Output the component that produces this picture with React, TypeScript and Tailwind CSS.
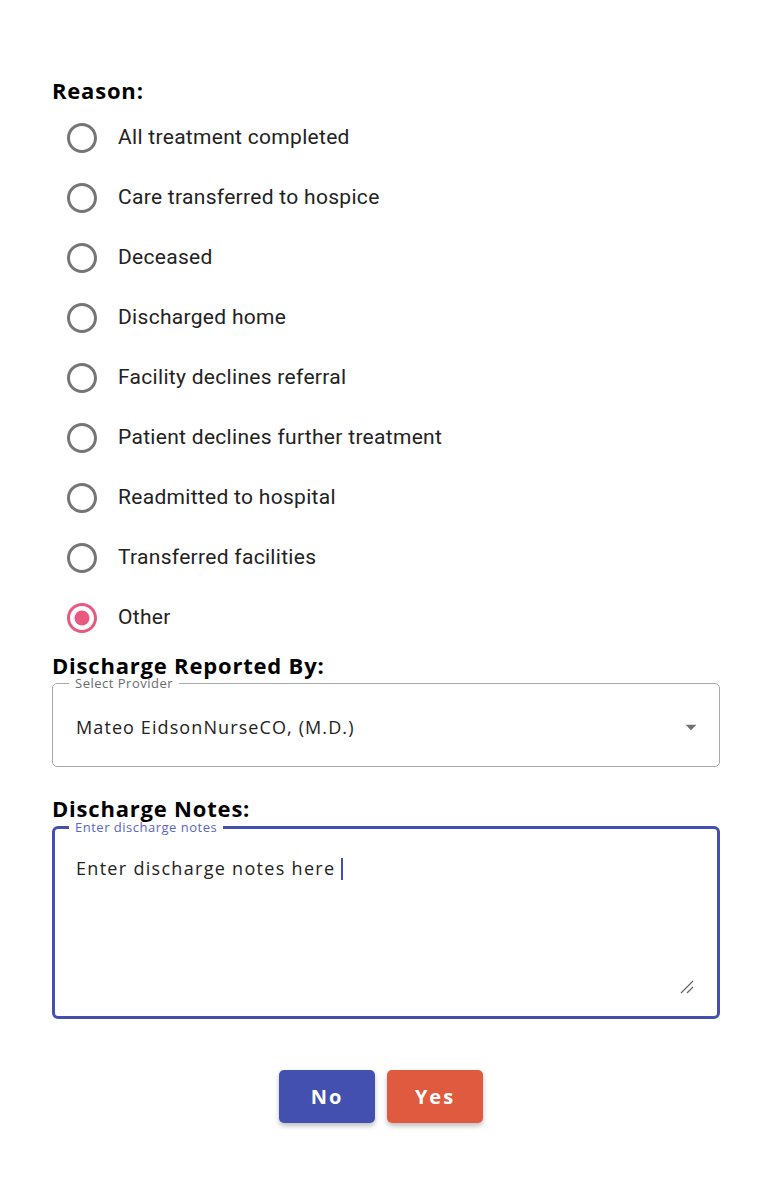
import React, { useState } from 'react';

const REASONS = [
    'All treatment completed',
    'Care transferred to hospice',
    'Deceased',
    'Discharged home',
    'Facility declines referral',
    'Patient declines further treatment',
    'Readmitted to hospital',
    'Transferred facilities',
    'Other',
];

const headFont = { fontFamily: '"Open Sans", "DejaVu Sans", sans-serif' };

const RadioIcon = ({ checked }: { checked: boolean }) => (
    <svg width="36" height="36" viewBox="0 0 24 24" fill={checked ? '#e8587f' : '#757575'}>
        <path d="M12 2C6.48 2 2 6.48 2 12s4.48 10 10 10 10-4.48 10-10S17.52 2 12 2zm0 18c-4.42 0-8-3.58-8-8s3.58-8 8-8 8 3.58 8 8-3.58 8-8 8z" />
        {checked && <circle cx="12" cy="12" r="5" />}
    </svg>
);

export default function App() {
    const [reason, setReason] = useState('Other');

    return (
        <div className="min-h-[1188px] w-[770px] bg-white pl-[52px] pr-[50px] pt-[75px] text-[#111]">
            {/* Reason */}
            <h2 className="h-[30px] text-[22px] font-bold leading-[30px] tracking-[0.8px] text-black" style={headFont}>Reason:</h2>
            <div className="flex flex-col pt-[3px]">
                {REASONS.map(r => (
                    <label key={r} onClick={() => setReason(r)} className="flex h-[60px] cursor-pointer items-center">
                        <span className="ml-[12px] flex h-[36px] w-[36px] items-center justify-center">
                            <RadioIcon checked={reason === r} />
                        </span>
                        <span
                            className="ml-[18px] text-[21px] tracking-[0.3px] text-[#222]"
                            style={{ fontFamily: 'Roboto, sans-serif' }}
                        >
                            {r}
                        </span>
                    </label>
                ))}
            </div>

            {/* Reported by */}
            <h2 className="mt-[5px] h-[24px] text-[22px] font-bold leading-[24px] tracking-[0.8px] text-black" style={headFont}>Discharge Reported By:</h2>
            <fieldset className="relative h-[90px] rounded-[5px] border border-[#a8a8a8] px-[14px]" style={headFont}>
                <legend className="ml-[2px] px-[6px] text-[13px] leading-[13px] tracking-[0.5px] text-[#6b6b6b]">Select Provider</legend>
                <div className="flex h-[76px] items-center justify-between pb-[2px] pl-[9px] pr-[1px]">
                    <span className="text-[18px] tracking-[1.1px] text-[#222]">Mateo EidsonNurseCO, (M.D.)</span>
                    <svg width="26" height="26" viewBox="0 0 24 24" fill="#707070">
                        <path d="M7 10l5 5 5-5z" />
                    </svg>
                </div>
            </fieldset>

            {/* Notes */}
            <h2 className="mt-[29px] h-[24px] text-[22px] font-bold leading-[24px] tracking-[0.8px] text-black" style={headFont}>Discharge Notes:</h2>
            <fieldset className="relative mt-[1px] h-[198px] rounded-[6px] border-[3px] border-[#4350b0] px-[12px]" style={headFont}>
                <legend className="ml-[2px] px-[6px] text-[13px] leading-[13px] tracking-[0.5px] text-[#5866c4]">Enter discharge notes</legend>
                <div className="flex items-center pl-[9px] pt-[21px]">
                    <span className="text-[18px] tracking-[1.3px] text-[#222]">Enter discharge notes here</span>
                    <span className="ml-[6px] inline-block h-[22px] w-[2px] bg-[#4350b0]" />
                </div>
                <svg className="absolute bottom-[22px] right-[23px]" width="14" height="14" viewBox="0 0 14 14" stroke="#666" strokeWidth="1.3">
                    <line x1="1" y1="13" x2="13" y2="1" />
                    <line x1="7" y1="13" x2="13" y2="7" />
                </svg>
            </fieldset>

            {/* Actions */}
            <div className="mt-[51px] flex justify-center gap-[12px] pr-[10px]">
                <button
                    className="h-[53px] w-[96px] rounded-[5px] bg-[#4350b0] text-[20px] font-bold tracking-[2px] text-white shadow-[0_3px_5px_rgba(0,0,0,0.25)]"
                    style={headFont}
                >
                    No
                </button>
                <button
                    className="h-[53px] w-[96px] rounded-[5px] bg-[#e05a40] text-[20px] font-bold tracking-[2px] text-white shadow-[0_3px_5px_rgba(0,0,0,0.25)]"
                    style={headFont}
                >
                    Yes
                </button>
            </div>
        </div>
    );
}
